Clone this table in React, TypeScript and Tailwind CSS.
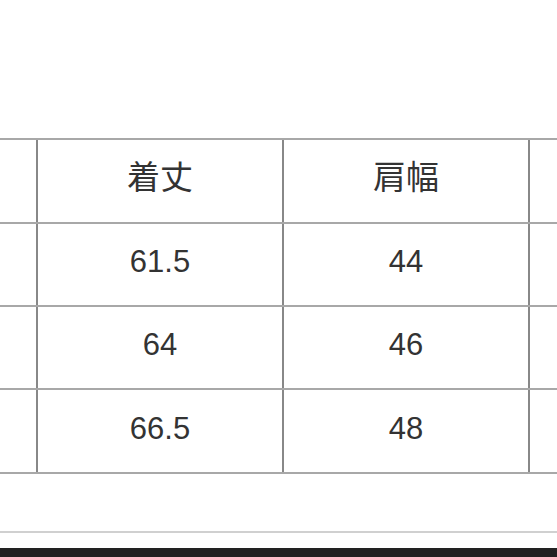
const header = ['', '着丈', '肩幅', '']
const rows = [
  ['', '61.5', '44', ''],
  ['', '64', '46', ''],
  ['', '66.5', '48', ''],
]
const heights = ['h-[84px]', 'h-[83px]', 'h-[83px]', 'h-[84px]']

function Row({ cells, h, jp }: { cells: string[]; h: string; jp?: boolean }) {
  return (
    <div className={`grid grid-cols-[38px_246px_246px_1fr] ${h} border-b-2 border-[#a8a8a8]`}>
      {cells.map((c, i) => (
        <div
          key={i}
          className={`flex items-center justify-center ${i < 3 ? 'border-r-2 border-[#888888]' : ''} ${
            jp ? 'text-[33px] pb-[6px]' : 'text-[31px] pb-[4px]'
          } text-[#333333]`}
        >
          {c}
        </div>
      ))}
    </div>
  )
}

export default function App() {
  return (
    <div
      className="w-[557px] h-[557px] bg-white overflow-hidden flex flex-col"
      style={{ fontFamily: '"Liberation Sans", "Noto Sans CJK JP", sans-serif' }}
    >
      <div className="mt-[138px] border-t-2 border-[#a8a8a8]">
        <Row cells={header} h={heights[0]} jp />
        {rows.map((r, i) => (
          <Row key={i} cells={r} h={heights[i + 1]} />
        ))}
      </div>
      <div className="mt-[57px] h-[2px] bg-[#d0d0d0]" />
      <div className="mt-[15px] h-[9px] bg-[#222222]" />
    </div>
  )
}
